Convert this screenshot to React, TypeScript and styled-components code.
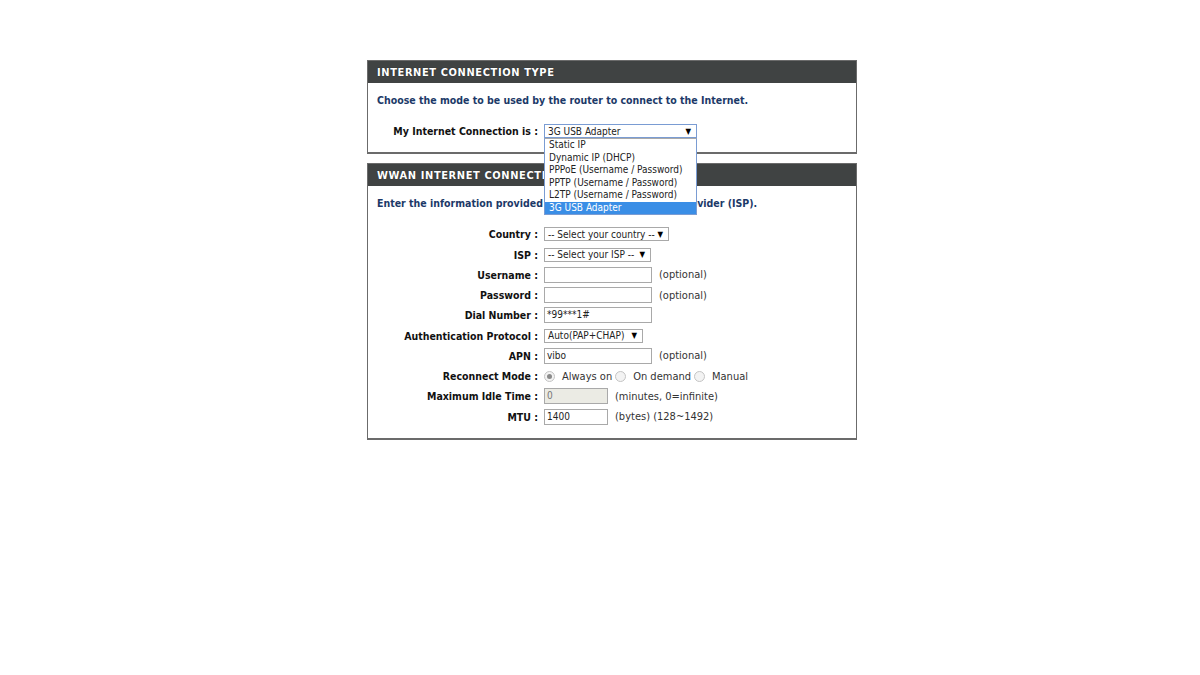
import * as React from "react";
import styled, { createGlobalStyle } from "styled-components";

const GlobalStyle = createGlobalStyle`
  html, body {
    margin: 0;
    padding: 0;
    background: #ffffff;
  }
  body {
    font-family: "DejaVu Sans Condensed", Tahoma, "Liberation Sans", sans-serif;
    font-size: 11px;
    color: #000;
  }
`;

const SPage = styled.div`
  padding: 60px 0 0 367px;
  display: flex;
  flex-direction: column;
  gap: 9px;
`;

const SPanel = styled.div`
  width: 488px;
  border: 1px solid #6b6b6b;
  border-bottom: 2px solid #6b6b6b;
  background: #fff;
`;

const SHeader = styled.div`
  height: 22px;
  display: flex;
  align-items: center;
  padding-left: 9px;
  background-color: #404343;
  color: #fff;
  font-weight: bold;
  font-size: 11px;
  letter-spacing: 0.6px;
  text-shadow: 0 0 1px rgba(0, 0, 0, 0.6);
`;

const SBody = styled.div<{ pad: string }>`
  padding: ${({ pad }) => pad};
`;

const SIntro = styled.p`
  margin: 0 0 0 9px;
  color: #1c3968;
  font-weight: bold;
  font-size: 10.5px;
  line-height: 14px;
`;

const SForm = styled.div<{ top: number }>`
  display: grid;
  grid-template-columns: 170px auto;
  column-gap: 6px;
  grid-auto-rows: 20.25px;
  align-items: center;
  margin-top: ${({ top }) => top}px;
`;

const SLabel = styled.div`
  text-align: right;
  font-weight: bold;
  font-size: 10.5px;
  color: #111;
  white-space: nowrap;
`;

const SField = styled.div`
  display: flex;
  align-items: center;
  gap: 7px;
  font-size: 11px;
  color: #333;
  white-space: nowrap;
`;

const SSelectWrap = styled.div`
  position: relative;
`;

const SSelect = styled.div<{ width: number; focused?: boolean }>`
  width: ${({ width }) => width}px;
  height: 14px;
  box-sizing: border-box;
  border: 1px solid ${({ focused }) => (focused ? "#7a9cd3" : "#a9a9a9")};
  background: #fff;
  display: flex;
  align-items: center;
  justify-content: space-between;
  padding: 0 5px 0 3px;
  font-size: 10px;
  color: #222;
  white-space: nowrap;
`;

const SArrow = styled.span`
  font-size: 8px;
  color: #000;
`;

const SMenu = styled.div`
  position: absolute;
  left: 0;
  top: 14px;
  width: 153px;
  box-sizing: border-box;
  border: 1px solid #7a9cd3;
  border-top: 1px solid #a9a9a9;
  background: #fff;
  z-index: 5;
`;

const SOption = styled.div<{ active?: boolean }>`
  height: 12.5px;
  line-height: 12.5px;
  padding-left: 4px;
  font-size: 10px;
  color: ${({ active }) => (active ? "#fff" : "#222")};
  background: ${({ active }) => (active ? "#3a8ee6" : "#fff")};
  white-space: nowrap;
`;

const SInput = styled.div<{ width: number; disabled?: boolean }>`
  width: ${({ width }) => width}px;
  height: 16px;
  box-sizing: border-box;
  border: 1px solid #a9a9a9;
  background: ${({ disabled }) => (disabled ? "#ebebe4" : "#fff")};
  color: ${({ disabled }) => (disabled ? "#777" : "#222")};
  font-size: 10px;
  line-height: 14px;
  padding-left: 2px;
`;

const SRadio = styled.span<{ checked?: boolean }>`
  width: 11px;
  height: 11px;
  box-sizing: border-box;
  border-radius: 50%;
  border: 1px solid #c4c4c4;
  background: #f3f3f3;
  display: inline-flex;
  align-items: center;
  justify-content: center;
  margin-right: 7px;
  &::after {
    content: "";
    width: 5px;
    height: 5px;
    border-radius: 50%;
    background: ${({ checked }) => (checked ? "#8a8a8a" : "transparent")};
  }
`;

const SRadioGroup = styled.div`
  display: flex;
  align-items: center;
  gap: 3px;
  font-size: 11px;
  color: #333;
`;

const SRadioItem = styled.label`
  display: inline-flex;
  align-items: center;
`;

const connectionTypes = [
  "Static IP",
  "Dynamic IP (DHCP)",
  "PPPoE (Username / Password)",
  "PPTP (Username / Password)",
  "L2TP (Username / Password)",
  "3G USB Adapter",
];

const App = () => {
  return (
    <>
      <GlobalStyle />
      <SPage>
        <SPanel>
          <SHeader>INTERNET CONNECTION TYPE</SHeader>
          <SBody pad="10px 0 11px">
            <SIntro>Choose the mode to be used by the router to connect to the Internet.</SIntro>
            <SForm top={14}>
              <SLabel>My Internet Connection is :</SLabel>
              <SField>
                <SSelectWrap>
                  <SSelect width={153} focused>
                    3G USB Adapter <SArrow>▼</SArrow>
                  </SSelect>
                  <SMenu>
                    {connectionTypes.map((t) => (
                      <SOption key={t} active={t === "3G USB Adapter"}>
                        {t}
                      </SOption>
                    ))}
                  </SMenu>
                </SSelectWrap>
              </SField>
            </SForm>
          </SBody>
        </SPanel>

        <SPanel>
          <SHeader>WWAN INTERNET CONNECTION TYPE</SHeader>
          <SBody pad="10px 0 11px">
            <SIntro>
              Enter the information provided by your Internet Service Provider (ISP).
            </SIntro>
            <SForm top={14}>
              <SLabel>Country :</SLabel>
              <SField>
                <SSelect width={125}>
                  -- Select your country -- <SArrow>▼</SArrow>
                </SSelect>
              </SField>

              <SLabel>ISP :</SLabel>
              <SField>
                <SSelect width={107}>
                  -- Select your ISP -- <SArrow>▼</SArrow>
                </SSelect>
              </SField>

              <SLabel>Username :</SLabel>
              <SField>
                <SInput width={108} />
                (optional)
              </SField>

              <SLabel>Password :</SLabel>
              <SField>
                <SInput width={108} />
                (optional)
              </SField>

              <SLabel>Dial Number :</SLabel>
              <SField>
                <SInput width={108}>*99***1#</SInput>
              </SField>

              <SLabel>Authentication Protocol :</SLabel>
              <SField>
                <SSelect width={99}>
                  Auto(PAP+CHAP) <SArrow>▼</SArrow>
                </SSelect>
              </SField>

              <SLabel>APN :</SLabel>
              <SField>
                <SInput width={108}>vibo</SInput>
                (optional)
              </SField>

              <SLabel>Reconnect Mode :</SLabel>
              <SField>
                <SRadioGroup>
                  <SRadioItem>
                    <SRadio checked />
                    Always on
                  </SRadioItem>
                  <SRadioItem>
                    <SRadio />
                    On demand
                  </SRadioItem>
                  <SRadioItem>
                    <SRadio />
                    Manual
                  </SRadioItem>
                </SRadioGroup>
              </SField>

              <SLabel>Maximum Idle Time :</SLabel>
              <SField>
                <SInput width={64} disabled>
                  0
                </SInput>
                (minutes, 0=infinite)
              </SField>

              <SLabel>MTU :</SLabel>
              <SField>
                <SInput width={64}>1400</SInput>
                (bytes) (128~1492)
              </SField>
            </SForm>
          </SBody>
        </SPanel>
      </SPage>
    </>
  );
};

export default App;
